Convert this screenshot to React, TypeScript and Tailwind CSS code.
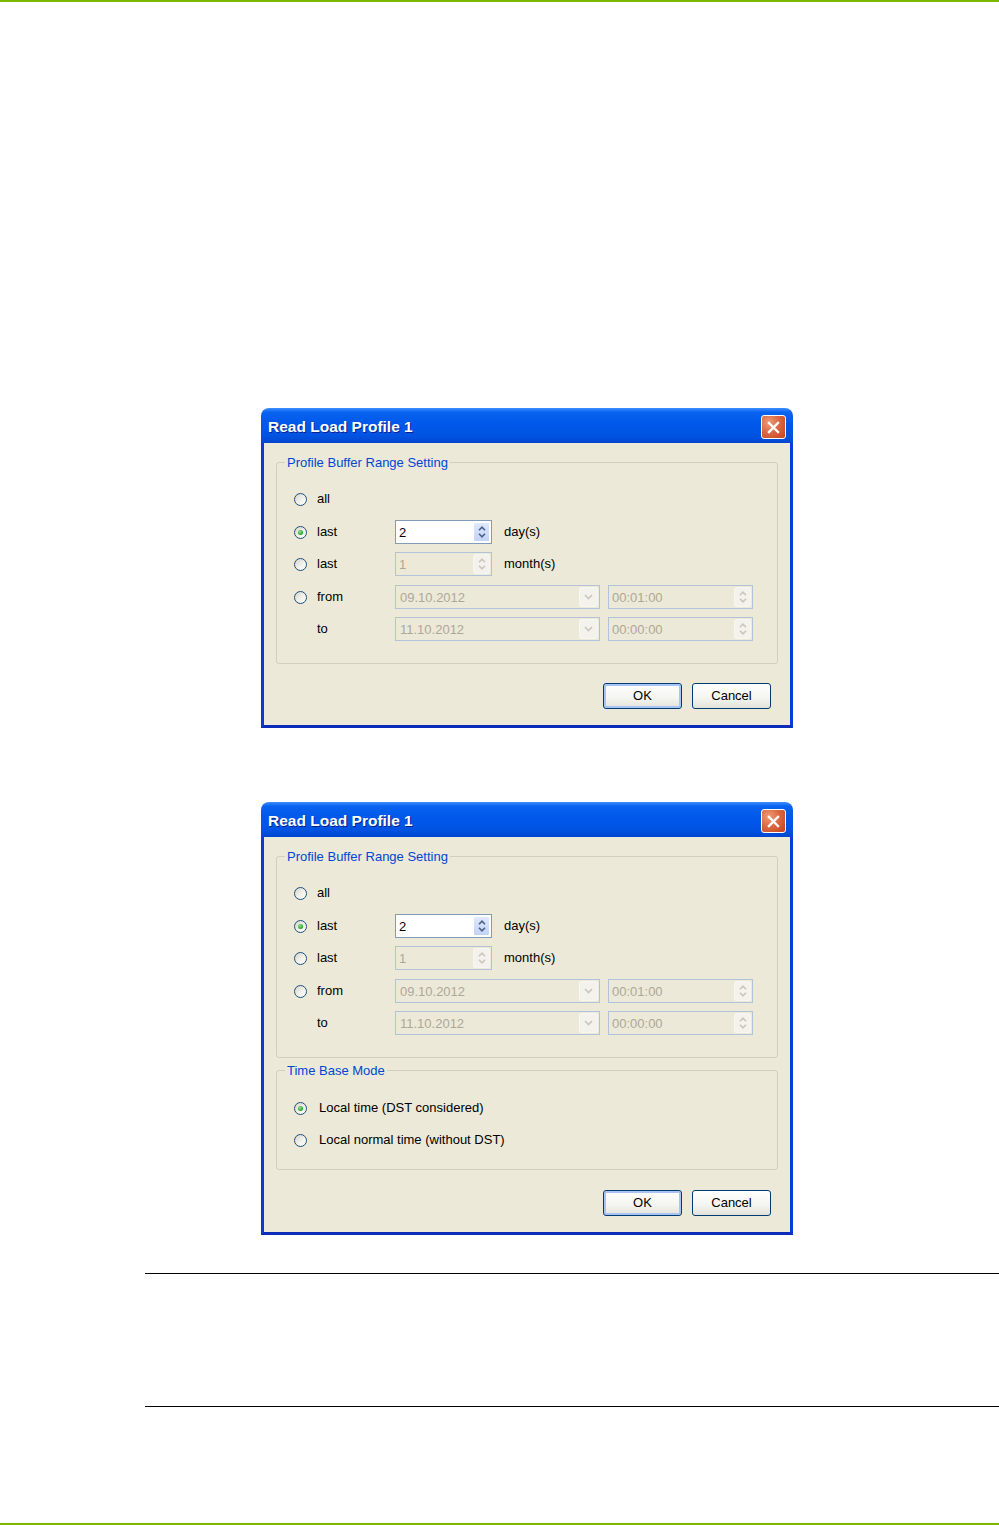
import type { ReactNode } from "react";

function Radio({ checked }: { checked?: boolean }) {
  return (
    <span className="flex h-[13px] w-[13px] shrink-0 items-center justify-center rounded-full border border-[#1c5180] bg-[linear-gradient(135deg,#d6d4ca_0%,#f2f1eb_55%,#ffffff_100%)]">
      {checked && (
        <span className="h-[5px] w-[5px] rounded-full bg-[radial-gradient(circle_at_40%_35%,#8ae48a_0%,#2fae2f_60%,#188b18_100%)]" />
      )}
    </span>
  );
}

function Arrow({ up, disabled }: { up?: boolean; disabled?: boolean }) {
  return (
    <svg width="8" height="5" viewBox="0 0 8 5" className="block">
      <path
        d={up ? "M1 4.2 L4 1.2 L7 4.2" : "M1 0.8 L4 3.8 L7 0.8"}
        fill="none"
        stroke={disabled ? "#c9c7ba" : "#4d6185"}
        strokeWidth="1.6"
      />
    </svg>
  );
}

function SpinBox({ value, disabled, width }: { value: string; disabled?: boolean; width: string }) {
  return (
    <div
      className={`flex h-[24px] items-stretch border p-[1px] ${width} ${
        disabled ? "border-[#b2c2d8] bg-[#ece9d8] text-[#aca899]" : "border-[#7f9db9] bg-white text-black"
      }`}
    >
      <span className="flex flex-1 items-center pl-[2px] leading-none">{value}</span>
      <span
        className={`flex w-[17px] flex-col rounded-[2px] border ${
          disabled ? "border-[#f7f6f1] bg-[#f3f2ec]" : "border-white bg-[linear-gradient(180deg,#dfe8fd_0%,#c2d3f8_100%)]"
        }`}
      >
        <span className="flex flex-1 items-end justify-center pb-[1px]">
          <Arrow up disabled={disabled} />
        </span>
        <span className="flex flex-1 items-start justify-center pt-[1px]">
          <Arrow disabled={disabled} />
        </span>
      </span>
    </div>
  );
}

function Combo({ value }: { value: string }) {
  return (
    <div className="flex h-[24px] w-[205px] items-stretch border border-[#b2c2d8] bg-[#ece9d8] p-[1px] text-[#aca899]">
      <span className="flex flex-1 items-center pl-[3px] leading-none">{value}</span>
      <span className="flex w-[19px] items-center justify-center rounded-[2px] border border-[#f7f6f1] bg-[#f3f2ec]">
        <svg width="9" height="6" viewBox="0 0 9 6">
          <path d="M1 1 L4.5 4.5 L8 1" fill="none" stroke="#c9c7ba" strokeWidth="1.6" />
        </svg>
      </span>
    </div>
  );
}

function Row({
  radio,
  checked,
  label,
  className,
  children,
}: {
  radio?: boolean;
  checked?: boolean;
  label: string;
  className?: string;
  children?: ReactNode;
}) {
  return (
    <div className={`flex h-[24px] items-center ${className ?? ""}`}>
      <span className="flex w-[13px] justify-center">{radio && <Radio checked={checked} />}</span>
      <span className="ml-[10px] w-[78px]">{label}</span>
      {children}
    </div>
  );
}

function Group({ title, className, children }: { title: string; className?: string; children: ReactNode }) {
  return (
    <div className={`rounded-[3px] border border-[#d0d0bf] pl-[17px] ${className ?? ""}`}>
      <div className="-mt-[8px] ml-[-9px] flex h-[15px]">
        <span className="bg-[#ece9d8] px-[2px] leading-[15px] text-[#0046d5]">{title}</span>
      </div>
      {children}
    </div>
  );
}

function XpButton({ label, focused }: { label: string; focused?: boolean }) {
  return (
    <div
      className={`flex h-[26px] w-[79px] items-center justify-center rounded-[3px] border border-[#003c74] bg-[linear-gradient(180deg,#ffffff_0%,#f4f4f0_60%,#e3e2da_100%)] ${
        focused ? "shadow-[inset_0_0_0_2px_#a9c4f2]" : ""
      }`}
    >
      {label}
    </div>
  );
}

function Dialog({ timeBase }: { timeBase?: boolean }) {
  return (
    <div className="ml-[261px] flex w-[532px] flex-col">
      <div className="flex h-[35px] items-center justify-between rounded-t-[8px] bg-[linear-gradient(180deg,#3d8fff_0%,#0a62f0_12%,#0058ea_45%,#0053e1_80%,#0046d0_100%)] pl-[7px] pr-[7px]">
        <span className="pt-[3px] text-[15.5px] font-bold text-white [text-shadow:1px_1px_0_#0a1e8c]">
          Read Load Profile 1
        </span>
        <span className="mt-[3px] flex h-[24px] w-[25px] items-center justify-center rounded-[3px] border border-white bg-[radial-gradient(circle_at_30%_30%,#ef9b78_0%,#dc6a43_45%,#c3421c_100%)]">
          <svg width="13" height="13" viewBox="0 0 13 13">
            <path d="M2 2 L11 11 M11 2 L2 11" stroke="white" strokeWidth="2.4" strokeLinecap="square" />
          </svg>
        </span>
      </div>
      <div className="flex flex-col border-x-[3px] border-b-[3px] border-[#0a3bd6] border-b-[#0a2cb8] bg-[#ece9d8] px-[12px] pt-[19px] pb-[16px] text-[13px] text-black">
        <Group title="Profile Buffer Range Setting" className="pb-[22px]">
          <Row radio label="all" className="mt-[17px]" />
          <Row radio checked label="last" className="mt-[9px]">
            <SpinBox value="2" width="w-[97px]" />
            <span className="ml-[12px]">day(s)</span>
          </Row>
          <Row radio label="last" className="mt-[8px]">
            <SpinBox value="1" disabled width="w-[97px]" />
            <span className="ml-[12px]">month(s)</span>
          </Row>
          <Row radio label="from" className="mt-[9px]">
            <Combo value="09.10.2012" />
            <span className="ml-[8px]">
              <SpinBox value="00:01:00" disabled width="w-[145px]" />
            </span>
          </Row>
          <Row label="to" className="mt-[8px]">
            <Combo value="11.10.2012" />
            <span className="ml-[8px]">
              <SpinBox value="00:00:00" disabled width="w-[145px]" />
            </span>
          </Row>
        </Group>
        {timeBase && (
          <Group title="Time Base Mode" className="mt-[12px] pb-[17px]">
            <div className="mt-[18px] flex h-[24px] items-center">
              <Radio checked />
              <span className="ml-[12px]">Local time (DST considered)</span>
            </div>
            <div className="mt-[8px] flex h-[24px] items-center">
              <Radio />
              <span className="ml-[12px]">Local normal time (without DST)</span>
            </div>
          </Group>
        )}
        <div className={`${timeBase ? "mt-[20px]" : "mt-[19px]"} flex justify-end gap-[10px] pr-[7px]`}>
          <XpButton label="OK" focused />
          <XpButton label="Cancel" />
        </div>
      </div>
    </div>
  );
}

export default function App() {
  return (
    <div className="flex h-[1525px] w-[999px] flex-col bg-white font-['Liberation_Sans',Arial,sans-serif]">
      <div className="h-[2px] bg-[#7cb800]" />
      <div className="mt-[406px]">
        <Dialog />
      </div>
      <div className="mt-[74px]">
        <Dialog timeBase />
      </div>
      <div className="ml-[145px] mt-[38px] border-t border-black" />
      <div className="ml-[145px] mt-[132px] border-t border-black" />
      <div className="mt-auto h-[2px] bg-[#7cb800]" />
    </div>
  );
}
